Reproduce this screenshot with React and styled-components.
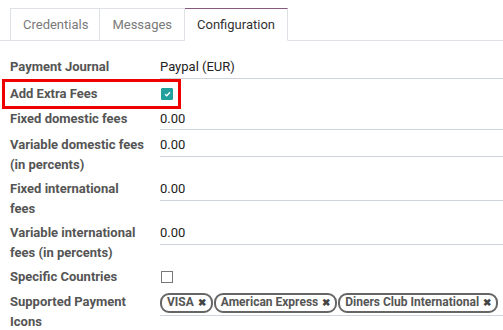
import React from 'react';
import styled, { createGlobalStyle } from 'styled-components';

const GlobalStyle = createGlobalStyle`
  body {
    margin: 0;
    background: #fff;
    font-family: Roboto, "Noto Sans", sans-serif;
    font-size: 13px;
    color: #4c4c4c;
  }
`;

const tabs = ['Credentials', 'Messages', 'Configuration'];

const rows = [
  { label: 'Payment Journal', value: 'Paypal (EUR)' },
  { label: 'Add Extra Fees', check: true, highlight: true },
  { label: 'Fixed domestic fees', value: '0.00' },
  { label: 'Variable domestic fees (in percents)', value: '0.00' },
  { label: 'Fixed international fees', value: '0.00' },
  { label: 'Variable international fees (in percents)', value: '0.00' },
  { label: 'Specific Countries', check: false },
];

const paymentIcons = ['VISA', 'American Express', 'Diners Club International'];

function App() {
  return (
    <Page>
      <GlobalStyle />
      <TabBar>
        {tabs.map((t) => (
          <Tab key={t} $active={t === 'Configuration'}>{t}</Tab>
        ))}
      </TabBar>
      <Form>
        {rows.map((r) => (
          <Row key={r.label} $highlight={r.highlight}>
            <Label>{r.label}</Label>
            {r.check === undefined ? (
              <Field>{r.value}</Field>
            ) : (
              <CheckCell>
                <Checkbox $checked={r.check}>
                  {r.check && (
                    <svg width="7" height="6" viewBox="0 0 7 6">
                      <path d="M1 3.2 L2.8 4.8 L6 1.2" stroke="#fff" strokeWidth="1.4" fill="none" />
                    </svg>
                  )}
                </Checkbox>
              </CheckCell>
            )}
          </Row>
        ))}
        <Row>
          <Label>Supported Payment Icons</Label>
          <TagField>
            {paymentIcons.map((p) => (
              <Tag key={p}>
                {p}
                <TagClose>✖</TagClose>
              </Tag>
            ))}
          </TagField>
        </Row>
      </Form>
    </Page>
  );
}

const Page = styled.div`
  width: 503px;
  height: 330px;
  overflow: hidden;
  padding-top: 8px;
  box-sizing: border-box;
`;

const TabBar = styled.div`
  display: flex;
  padding-left: 10px;
  border-bottom: 1px solid #dee2e6;
  height: 32px;
`;

const Tab = styled.div`
  display: flex;
  align-items: center;
  padding: 0 12px;
  margin-bottom: -1px;
  font-size: 13px;
  color: ${(p) => (p.$active ? '#333' : '#7a7a7a')};
  border: 1px solid #dee2e6;
  border-top: 1px solid ${(p) => (p.$active ? '#875a7b' : '#dee2e6')};
  border-bottom-color: ${(p) => (p.$active ? '#fff' : '#dee2e6')};
  background: #fff;
  & + & {
    border-left-width: 0;
  }
  &:first-child {
    padding: 0 11px 0 12px;
  }
`;

const Form = styled.div`
  display: flex;
  flex-direction: column;
  gap: 5px;
  padding: 16px 0 0 10px;
`;

const Row = styled.div`
  display: grid;
  grid-template-columns: 150px 1fr;
  align-items: start;
  line-height: 19.5px;
  position: relative;
  ${(p) =>
    p.$highlight &&
    `
    &::after {
      content: '';
      position: absolute;
      left: -8px;
      top: -5px;
      width: 173px;
      height: 24px;
      border: 3px solid #ee0000;
      pointer-events: none;
    }
  `}
`;

const Label = styled.div`
  font-weight: 700;
  color: #555;
  padding-right: 15px;
`;

const Field = styled.div`
  color: #222;
  border-bottom: 1px solid #ced4da;
  padding-bottom: 1px;
`;

const CheckCell = styled.div`
  display: flex;
  align-items: center;
  height: 20px;
`;

const Checkbox = styled.span`
  width: 12px;
  height: 12px;
  box-sizing: border-box;
  display: flex;
  align-items: center;
  justify-content: center;
  background: ${(p) => (p.$checked ? '#21a09e' : '#fff')};
  border: 1px solid ${(p) => (p.$checked ? '#21a09e' : '#777')};
  border-radius: ${(p) => (p.$checked ? '1px' : '0')};
  margin-left: 1px;
`;

const TagField = styled.div`
  display: flex;
  flex-wrap: nowrap;
  gap: 1px;
  border-bottom: 1px solid #ced4da;
  padding: 1px 0 2px;
  margin-right: -10px;
`;

const Tag = styled.span`
  display: inline-flex;
  align-items: center;
  gap: 4px;
  padding: 0 5px;
  height: 16px;
  border: 2px solid #666;
  border-radius: 9px;
  font-size: 12px;
  font-weight: 700;
  color: #555;
  white-space: nowrap;
`;

const TagClose = styled.span`
  font-size: 10px;
  color: #444;
`;

export default App;
